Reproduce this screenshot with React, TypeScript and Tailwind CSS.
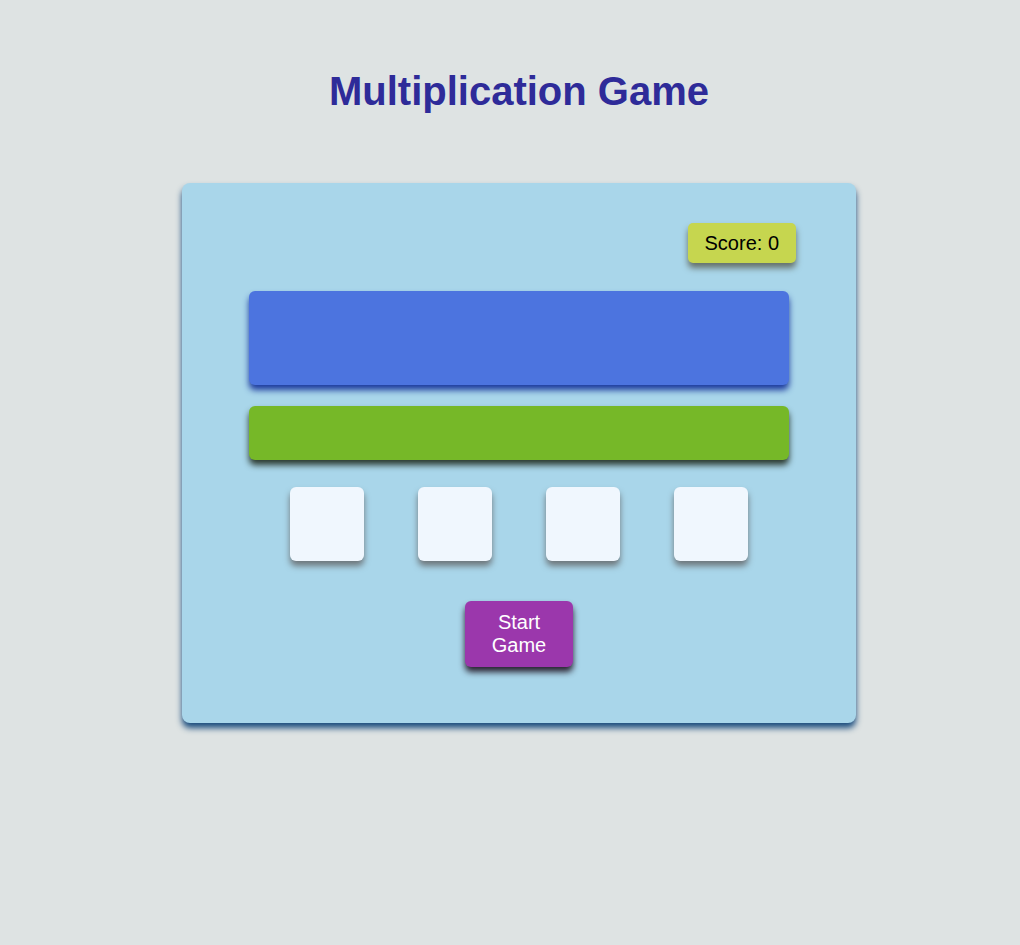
export default function App() {
  const choices = [0, 1, 2, 3];

  return (
    <div
      className="min-h-screen w-full bg-[#dee3e3] flex flex-col items-center pl-[18px]"
      style={{ fontFamily: '"Liberation Sans", Arial, sans-serif' }}
    >
      <h1 className="mt-[68px] text-[40px] leading-[46px] font-bold text-[#2e2b99]">Multiplication Game</h1>

      <div className="mt-[69px] w-[674px] h-[540px] rounded-lg bg-[#a9d6ea] shadow-[0_5px_6px_#1b4c7d] flex flex-col items-center pt-[40px]">
        <div className="w-full flex justify-end pr-[60px]">
          <div className="h-[40px] px-[17px] flex items-center rounded-[5px] bg-[#c6d64f] text-[20px] text-black shadow-[0_5px_6px_#65706a]">
            Score: 0
          </div>
        </div>

        <div className="mt-[28px] w-[540px] h-[94px] rounded-md bg-[#4c74df] shadow-[0_5px_6px_#1c3a9e]" />

        <div className="mt-[21px] w-[540px] h-[54px] rounded-md bg-[#76b828] shadow-[0_5px_6px_#2c3a30]" />

        <div className="mt-[27px] flex gap-[54px]">
          {choices.map((c) => (
            <div key={c} className="w-[74px] h-[74px] rounded-md bg-[#f0f7fe] shadow-[0_5px_6px_#6e777c]" />
          ))}
        </div>

        <button className="mt-[40px] w-[108px] px-[10px] py-[10px] rounded-md bg-[#9b37ac] text-white text-[20px] leading-[23px] text-center shadow-[0_5px_6px_#2a2230]">
          Start Game
        </button>
      </div>
    </div>
  );
}
